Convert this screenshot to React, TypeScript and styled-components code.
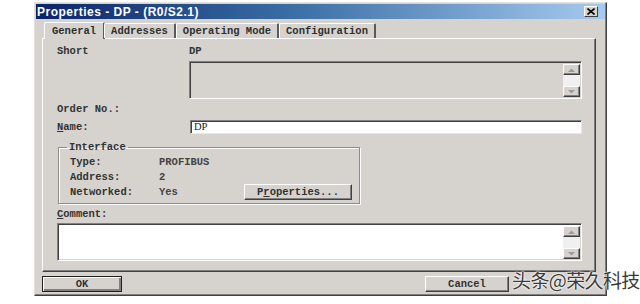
import React from 'react'
import styled, { createGlobalStyle } from 'styled-components'

const GlobalStyle = createGlobalStyle`
  html, body {
    margin: 0;
    padding: 0;
    background: #ffffff;
  }
  body {
    font-family: "Liberation Mono", "DejaVu Sans Mono", monospace;
  }
`

const FACE = '#d6d3ce'

const Page = styled.div`
  position: relative;
  width: 640px;
  height: 304px;
  padding: 2px 0 0 34px;
  box-sizing: border-box;
  overflow: hidden;
`

const Window = styled.div`
  width: 573px;
  height: 294px;
  box-sizing: border-box;
  background: ${FACE};
  border: 1px solid;
  border-color: #e4e2de #404040 #404040 #e4e2de;
  box-shadow: inset -1px -1px 0 #808080;
  padding: 1px 1px 0 1px;
  display: flex;
  flex-direction: column;
`

const TitleBar = styled.div`
  height: 15px;
  display: flex;
  align-items: center;
  justify-content: space-between;
  padding: 0 7px 0 1px;
  background: linear-gradient(to right, #0a246a 0%, #3a6ea5 45%, #a6caf0 100%);
`

const Title = styled.span`
  color: #ffffff;
  font-family: "Liberation Sans", Arial, sans-serif;
  font-weight: bold;
  font-size: 12px;
  letter-spacing: 0.5px;
`

const CloseBtn = styled.div`
  width: 14px;
  height: 11px;
  box-sizing: border-box;
  background: ${FACE};
  border: 1px solid;
  border-color: #ffffff #404040 #404040 #ffffff;
  display: flex;
  align-items: center;
  justify-content: center;
`

const Body = styled.div`
  flex: 1;
  display: flex;
  flex-direction: column;
  padding: 2px 9px 0 6px;
`

const TabRow = styled.div`
  display: flex;
  align-items: flex-end;
  height: 17px;
  padding-left: 3px;
  position: relative;
  z-index: 1;
`

const Tab = styled.div<{ $active?: boolean }>`
  height: ${p => (p.$active ? 17 : 15)}px;
  box-sizing: border-box;
  padding: 0 ${p => (p.$active ? 7 : 6)}px;
  margin: 0 ${p => (p.$active ? -1 : 0)}px ${p => (p.$active ? -1 : 0)}px;
  display: flex;
  align-items: center;
  font-size: 10.5px;
  font-weight: bold;
  color: #2e2e2e;
  background: ${FACE};
  border-top: 1px solid #ffffff;
  border-left: 1px solid #ffffff;
  border-right: 2px solid #5a5a5a;
  border-radius: 2px 2px 0 0;
`

const Panel = styled.div`
  height: 234px;
  box-sizing: border-box;
  border: 1px solid;
  border-color: #ffffff #404040 #404040 #ffffff;
  box-shadow: inset -1px -1px 0 #808080;
  padding: 6px 13px 0 14px;
  display: flex;
  flex-direction: column;
`

const Label = styled.div`
  font-size: 10.5px;
  line-height: 12px;
  font-weight: bold;
  color: #333333;
  white-space: pre;
`

const Hot = styled.span`
  text-decoration: underline;
`

const ShortGrid = styled.div`
  display: grid;
  grid-template-columns: 132px 1fr;
  row-gap: 4px;
`

const Sunken = styled.div<{ $white?: boolean; $h: number }>`
  height: ${p => p.$h}px;
  box-sizing: border-box;
  background: ${p => (p.$white ? '#ffffff' : FACE)};
  border: 1px solid;
  border-color: #808080 #ffffff #ffffff #808080;
  box-shadow: inset 1px 1px 0 #404040, inset -1px -1px 0 ${FACE};
  display: flex;
  justify-content: flex-end;
  padding: 2px 1px 1px 2px;
`

const ScrollBar = styled.div`
  width: 17px;
  display: flex;
  flex-direction: column;
  justify-content: space-between;
  background: #f0f0f0;
`

const ScrollBtn = styled.div`
  height: 11px;
  box-sizing: border-box;
  background: ${FACE};
  border: 1px solid;
  border-color: #ffffff #404040 #404040 #ffffff;
  box-shadow: inset -1px -1px 0 #808080;
  display: flex;
  align-items: center;
  justify-content: center;
`

const OrderLabel = styled(Label)`
  margin-top: 4px;
`

const NameRow = styled.div`
  display: grid;
  grid-template-columns: 132px 1fr;
  align-items: center;
  margin-top: 5px;
`

const TextInput = styled.div`
  height: 14px;
  box-sizing: border-box;
  background: #ffffff;
  border: 1px solid;
  border-color: #808080 #e8e8e8 #e8e8e8 #808080;
  box-shadow: inset 1px 1px 0 #404040;
  padding: 0 0 0 3px;
  font-family: "Liberation Serif", "Times New Roman", serif;
  font-size: 10.5px;
  line-height: 12px;
  color: #222222;
  margin-left: 1px;
`

const Group = styled.fieldset`
  width: 302px;
  box-sizing: border-box;
  margin: 7px 0 0 1px;
  padding: 1px 7px 4px 11px;
  border: 1px solid #8c8c8c;
  box-shadow: 1px 1px 0 #ffffff, inset 1px 1px 0 #ffffff;
`

const Legend = styled.legend`
  padding: 0 2px;
  margin-left: -3px;
  font-size: 10.5px;
  line-height: 12px;
  font-weight: bold;
  color: #333333;
`

const InfoGrid = styled.div`
  display: grid;
  grid-template-columns: 89px 85px 108px;
  grid-auto-rows: 15px;
  align-items: center;
`

const Value = styled(Label)`
  color: #444444;
`

const Button = styled.div<{ $w: number }>`
  width: ${p => p.$w}px;
  height: 16px;
  box-sizing: border-box;
  background: ${FACE};
  border: 1px solid;
  border-color: #ffffff #404040 #404040 #ffffff;
  box-shadow: inset -1px -1px 0 #808080;
  display: flex;
  align-items: center;
  justify-content: center;
  font-size: 10.5px;
  font-weight: bold;
  color: #333333;
  white-space: pre;
`

const DefaultButton = styled(Button)`
  border: 1px solid #202020;
  box-shadow: inset 1px 1px 0 #ffffff, inset -2px -2px 0 #808080;
`

const CommentLabel = styled(Label)`
  margin-top: 4px;
`

const CommentBox = styled(Sunken)`
  margin-top: 3px;
`

const Footer = styled.div`
  display: flex;
  align-items: center;
  justify-content: space-between;
  padding: 4px 87px 0 0;
`

const Watermark = styled.div`
  position: absolute;
  left: 512px;
  top: 269px;
  font-family: "Noto Sans CJK SC", "Noto Sans", sans-serif;
  font-size: 19px;
  line-height: 22px;
  color: #3a3a3a;
  letter-spacing: -0.6px;
  text-shadow: 0 0 2px #ffffff, 0 0 2px #ffffff, 0 0 1px #ffffff;
`

function Arrow({ up }: { up?: boolean }) {
  return (
    <svg width="7" height="4" viewBox="0 0 7 4">
      <path d={up ? 'M0 4 L3.5 0.5 L7 4 Z' : 'M0 0 L3.5 3.5 L7 0 Z'} fill="#9a9a9a" />
    </svg>
  )
}

function Scroller() {
  return (
    <ScrollBar>
      <ScrollBtn><Arrow up /></ScrollBtn>
      <ScrollBtn><Arrow /></ScrollBtn>
    </ScrollBar>
  )
}

export default function App() {
  return (
    <Page>
      <GlobalStyle />
      <Window>
        <TitleBar>
          <Title>Properties - DP - (R0/S2.1)</Title>
          <CloseBtn>
            <svg width="8" height="7" viewBox="0 0 8 7">
              <path d="M0.5 0.5 L7.5 6.5 M7.5 0.5 L0.5 6.5" stroke="#000" strokeWidth="1.6" />
            </svg>
          </CloseBtn>
        </TitleBar>
        <Body>
          <TabRow>
            <Tab $active>General</Tab>
            <Tab>Addresses</Tab>
            <Tab>Operating Mode</Tab>
            <Tab>Configuration</Tab>
          </TabRow>
          <Panel>
            <ShortGrid>
              <Label>Short</Label>
              <Label>DP</Label>
              <span />
              <Sunken $h={38}><Scroller /></Sunken>
            </ShortGrid>
            <OrderLabel>Order No.:</OrderLabel>
            <NameRow>
              <Label><Hot>N</Hot>ame:</Label>
              <TextInput>DP</TextInput>
            </NameRow>
            <Group>
              <Legend>Interface</Legend>
              <InfoGrid>
                <Label>Type:</Label>
                <Value>PROFIBUS</Value>
                <span />
                <Label>Address:</Label>
                <Value>2</Value>
                <span />
                <Label>Networked:</Label>
                <Value>Yes</Value>
                <Button $w={108}>P<Hot>r</Hot>operties...</Button>
              </InfoGrid>
            </Group>
            <CommentLabel><Hot>C</Hot>omment:</CommentLabel>
            <CommentBox $white $h={38}><Scroller /></CommentBox>
          </Panel>
          <Footer>
            <DefaultButton $w={80}>OK</DefaultButton>
            <Button $w={84}>Cancel</Button>
          </Footer>
        </Body>
      </Window>
      <Watermark>头条@荣久科技</Watermark>
    </Page>
  )
}
